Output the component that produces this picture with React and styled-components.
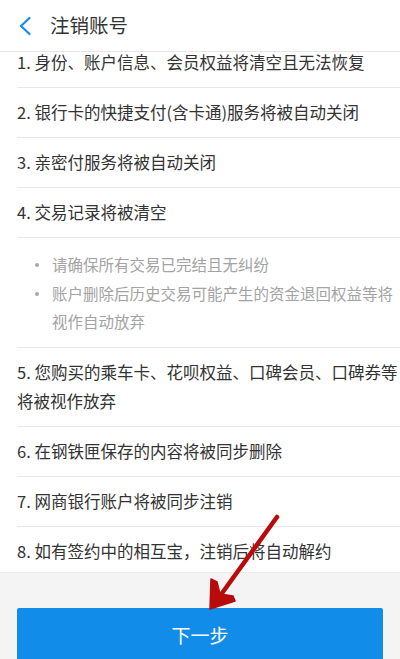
import React from "react";
import styled, { createGlobalStyle } from "styled-components";

const Global = createGlobalStyle`
  html, body { margin: 0; padding: 0; background: #ffffff; }
  body { font-family: "Noto Sans CJK SC", "Noto Sans", sans-serif; -webkit-font-smoothing: antialiased; }
  * { box-sizing: border-box; }
`;

const Page = styled.div`
  position: relative;
  width: 400px;
  height: 659px;
  overflow: hidden;
  display: flex;
  flex-direction: column;
  background: #ffffff;
`;

const Header = styled.header`
  position: relative;
  z-index: 1;
  height: 52px;
  flex: none;
  display: flex;
  align-items: center;
  padding-left: 17px;
  gap: 17px;
  border-bottom: 1px solid #e6e6e6;
  background: #fff;
`;

const BackButton = styled.span`
  width: 16px;
  height: 22px;
  display: flex;
  align-items: center;
  justify-content: center;
`;

const Title = styled.h1`
  margin: -2px 0 0;
  font-size: 19.5px;
  font-weight: 400;
  color: #333;
  line-height: 1;
`;

const List = styled.ul`
  list-style: none;
  margin: 0;
  padding: 0;
  flex: none;
`;

const Row = styled.li`
  margin-left: 17px;
  margin-top: ${(p) => (p.$first ? "-4px" : "0")};
  padding-top: ${(p) => (p.$first ? "0px" : "10px")};
  padding-bottom: ${(p) => (p.$last ? "6px" : "10px")};
  border-bottom: ${(p) => (p.$last ? "none" : "1px solid #e8e8e8")};
  font-size: 16.5px;
  line-height: 29px;
  color: #333;
  white-space: normal;
`;

const SubList = styled.li`
  margin-left: 17px;
  padding: 12px 0 11px 0;
  border-bottom: 1px solid #e8e8e8;
`;

const Bullet = styled.div`
  position: relative;
  padding-left: 35px;
  font-size: 15.5px;
  line-height: 28.5px;
  color: #a3a3a3;
  &::before {
    content: "";
    position: absolute;
    left: 18px;
    top: 13px;
    width: 4px;
    height: 4px;
    border-radius: 50%;
    background: #a8a8a8;
  }
`;

const Footer = styled.div`
  flex: 1;
  background: #f4f4f4;
  border-top: 1px solid #ececec;
  padding: 35px 17px 0;
`;

const NextButton = styled.button`
  width: 100%;
  height: 54px;
  border: none;
  border-radius: 2px;
  background: #118de9;
  color: #fff;
  font-family: inherit;
  font-size: 19px;
  padding: 0 0 1px;
`;

const Overlay = styled.svg`
  position: absolute;
  left: 0;
  top: 0;
  z-index: 2;
  pointer-events: none;
`;

const items = [
  "1. 身份、账户信息、会员权益将清空且无法恢复",
  "2. 银行卡的快捷支付(含卡通)服务将被自动关闭",
  "3. 亲密付服务将被自动关闭",
  "4. 交易记录将被清空",
];
const bullets = [
  "请确保所有交易已完结且无纠纷",
  "账户删除后历史交易可能产生的资金退回权益等将视作自动放弃",
];
const rest = [
  "5. 您购买的乘车卡、花呗权益、口碑会员、口碑券等将被视作放弃",
  "6. 在钢铁匣保存的内容将被同步删除",
  "7. 网商银行账户将被同步注销",
  "8. 如有签约中的相互宝，注销后将自动解约",
];

export default function App() {
  return (
    <Page>
      <Global />
      <Header>
        <BackButton>
          <svg width="14" height="20" viewBox="0 0 14 20">
            <path d="M11.5 2 L3 10 L11.5 18" fill="none" stroke="#1a8cec" strokeWidth="2.3" strokeLinecap="round" strokeLinejoin="round" />
          </svg>
        </BackButton>
        <Title>注销账号</Title>
      </Header>
      <List>
        {items.map((t, i) => (
          <Row key={t} $first={i === 0}>{t}</Row>
        ))}
        <SubList>
          {bullets.map((b) => (
            <Bullet key={b}>{b}</Bullet>
          ))}
        </SubList>
        {rest.map((t, i) => (
          <Row key={t} $last={i === rest.length - 1}>{t}</Row>
        ))}
      </List>
      <Footer>
        <NextButton>下一步</NextButton>
      </Footer>
      <Overlay width="400" height="659" viewBox="0 0 400 659">
        <line x1="277" y1="517" x2="220" y2="596" stroke="#b80c0c" strokeWidth="4.5" strokeLinecap="round" />
        <path d="M210 609 L211 579 L217 582 L220 594 L233 596 L235 601 Z" fill="#b80c0c" stroke="#b80c0c" strokeWidth="1.5" strokeLinejoin="round" />
      </Overlay>
    </Page>
  );
}
